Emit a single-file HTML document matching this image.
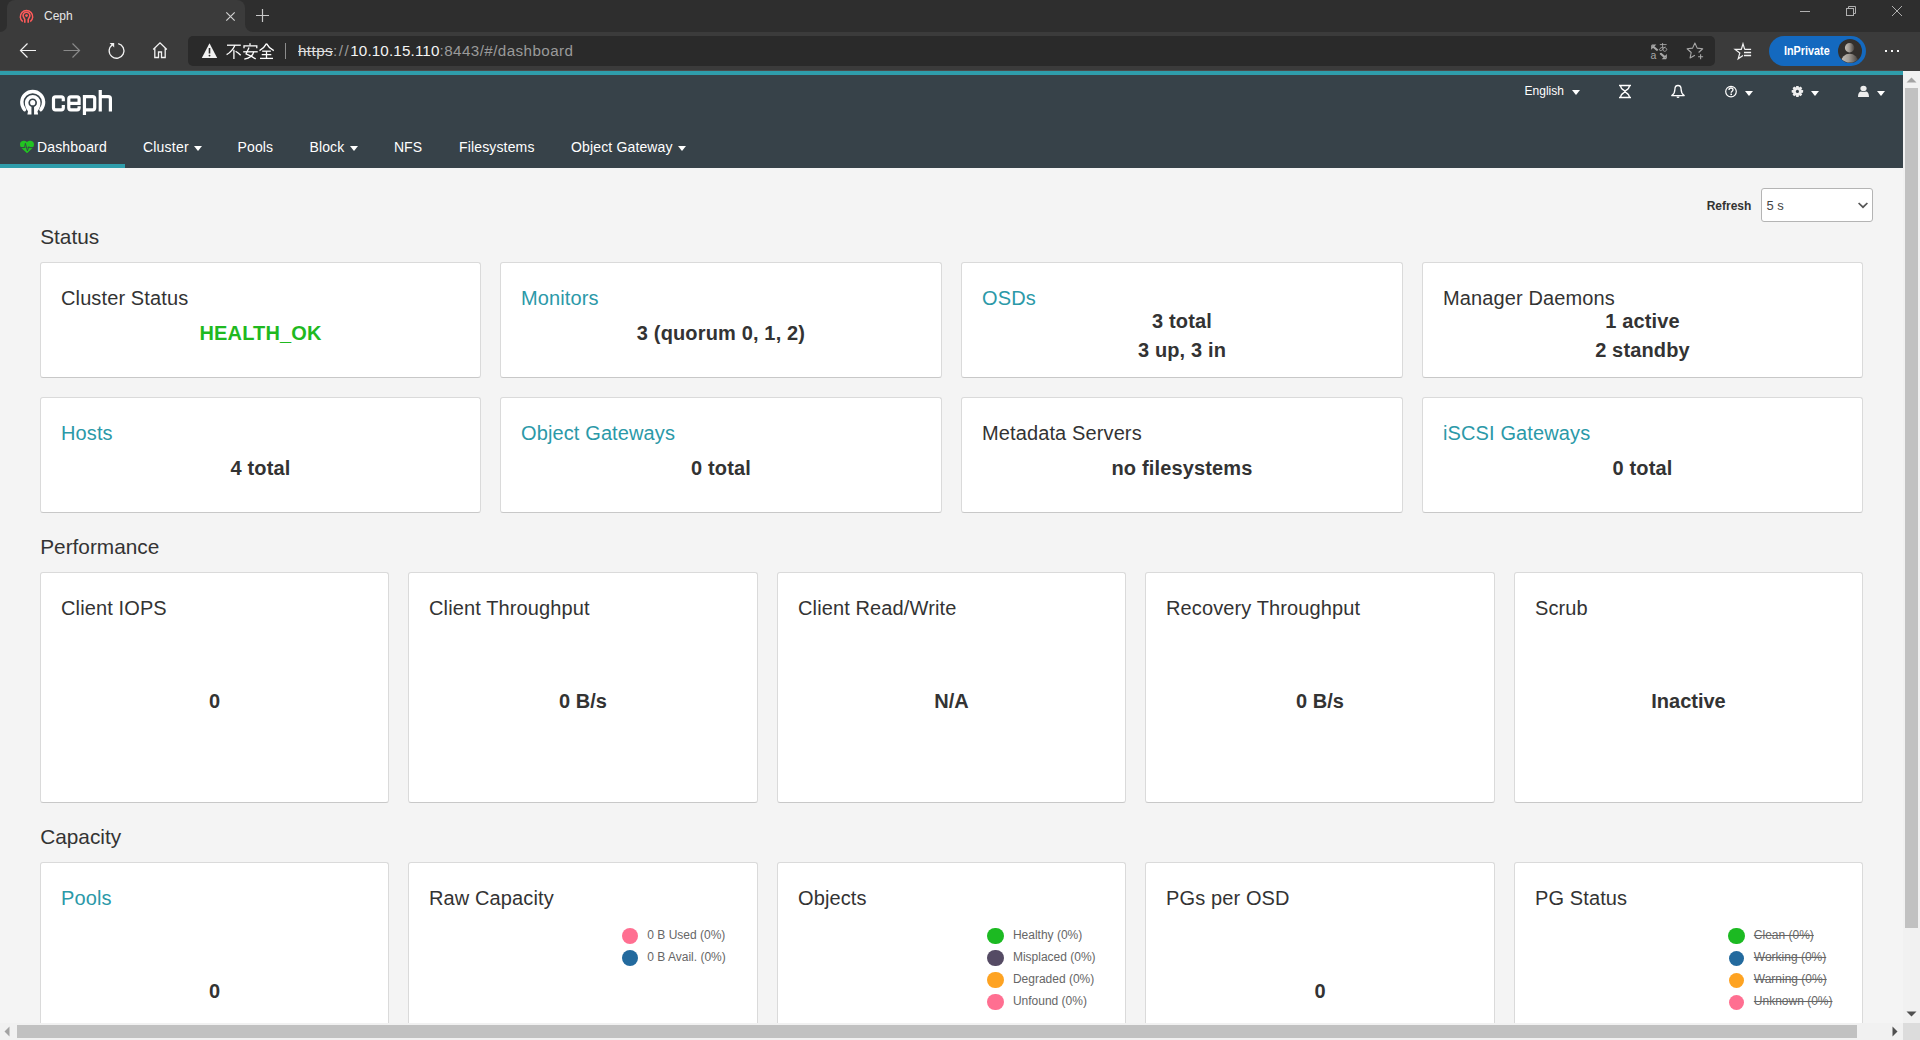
<!DOCTYPE html>
<html><head><meta charset="utf-8"><title>Ceph</title>
<style>
html,body{margin:0;padding:0;}
body{width:1920px;height:1040px;overflow:hidden;position:relative;background:#f4f4f4;font-family:"Liberation Sans",sans-serif;}
.t{position:absolute;white-space:nowrap;}
.card{position:absolute;background:#fff;border:1px solid #dadada;border-bottom-color:#c8c8c8;border-radius:3px;box-sizing:border-box;}
</style></head><body>

<div style="position:absolute;left:0px;top:0px;width:1920px;height:32px;background:#2e2e2e;"></div>
<div style="position:absolute;left:0px;top:31px;width:1920px;height:40px;background:#3b3b3b;"></div>
<div style="position:absolute;left:7px;top:0px;width:238px;height:41px;background:#3b3b3b;border-radius:8px 8px 0 0;"></div>
<div style="position:absolute;left:0px;top:23px;width:7px;height:9px;background:#3b3b3b;"></div>
<div style="position:absolute;left:0px;top:0px;width:7px;height:32px;background:#2e2e2e;border-radius:0 0 8px 0;"></div>
<div style="position:absolute;left:245px;top:23px;width:9px;height:9px;background:#3b3b3b;"></div>
<div style="position:absolute;left:245px;top:0px;width:1675px;height:32px;background:#2e2e2e;border-radius:0 0 0 8px;"></div>
<svg style="position:absolute;left:18.5px;top:8px;" width="15" height="15" viewBox="0 0 15 15"><g transform="translate(0.5,0.5)" fill="none" stroke="#ff5a5a"><path d="M3.2,13.1 A6.2,6.2 0 1 1 10.8,13.1" stroke-width="1.5"/><path d="M5.3,14.3 V11 C5.3,10.2 3.6,9 3.6,7.1 A3.4,3.4 0 0 1 10.4,7.1 C10.4,9 8.7,10.2 8.7,11 V14.3" stroke-width="1.6"/></g><circle cx="7.5" cy="7.6" r="1.35" fill="#ff5a5a"/></svg>
<div class="t" style="left:44px;top:10.14px;font-size:12px;line-height:12px;font-weight:400;color:#e6e6e6;">Ceph</div>
<svg style="position:absolute;left:225px;top:11px;" width="11" height="11" viewBox="0 0 11 11"><path d="M1.3,1.3 L9.7,9.7 M9.7,1.3 L1.3,9.7" stroke="#d0d0d0" stroke-width="1.2"/></svg>
<svg style="position:absolute;left:255px;top:8px;" width="15" height="15" viewBox="0 0 15 15"><path d="M7.5,1 V14 M1,7.5 H14" stroke="#c8c8c8" stroke-width="1.2"/></svg>
<svg style="position:absolute;left:1799px;top:5px;" width="12" height="12" viewBox="0 0 12 12"><path d="M1,6.5 H11" stroke="#b0b0b0" stroke-width="1"/></svg>
<svg style="position:absolute;left:1845px;top:5px;" width="12" height="12" viewBox="0 0 12 12"><rect x="1.5" y="3.5" width="7" height="7" fill="none" stroke="#b0b0b0"/><path d="M3.5,3.5 V1.5 H10.5 V8.5 H8.5" fill="none" stroke="#b0b0b0"/></svg>
<svg style="position:absolute;left:1891px;top:5px;" width="12" height="12" viewBox="0 0 12 12"><path d="M1,1 L11,11 M11,1 L1,11" stroke="#b0b0b0" stroke-width="1"/></svg>
<svg style="position:absolute;left:19px;top:42px;" width="18" height="17" viewBox="0 0 18 17"><path d="M1.5,8.5 H17 M8.5,1.5 L1.5,8.5 L8.5,15.5" fill="none" stroke="#f2f2f2" stroke-width="1.2"/></svg>
<svg style="position:absolute;left:63px;top:42px;" width="18" height="17" viewBox="0 0 18 17"><path d="M0.5,8.5 H16 M9.5,1.5 L16.5,8.5 L9.5,15.5" fill="none" stroke="#8a8a8a" stroke-width="1.2"/></svg>
<svg style="position:absolute;left:106px;top:42px;" width="20" height="18" viewBox="0 0 20 18"><path d="M12.2,1.6 A7.4,7.4 0 1 1 6.1,2.9" fill="none" stroke="#f2f2f2" stroke-width="1.3"/><path d="M3.6,1 H8.2 V5.6 Z" fill="#f2f2f2"/></svg>
<svg style="position:absolute;left:152px;top:41px;" width="16" height="18" viewBox="0 0 16 18"><path d="M1.2,8.5 L8,1.8 L14.8,8.5 M2.8,7 V16.5 H6.5 V11 H9.5 V16.5 H13.2 V7" fill="none" stroke="#f2f2f2" stroke-width="1.3"/></svg>
<div style="position:absolute;left:188px;top:36px;width:1527px;height:30px;background:#2a2a2a;border-radius:5px;"></div>
<svg style="position:absolute;left:201px;top:42px;" width="17" height="17" viewBox="0 0 17 17"><path d="M8.5,1.2 L16.2,16 H0.8 Z" fill="#f2f2f2"/><path d="M8.5,6 V11.5" stroke="#2a2a2a" stroke-width="1.6"/><circle cx="8.5" cy="13.6" r="0.95" fill="#2a2a2a"/></svg>
<svg style="position:absolute;left:226px;top:43px;" width="49" height="17" viewBox="0 0 49 17"><g fill="none" stroke="#ffffff" stroke-width="1.3" stroke-linecap="butt">
<!-- 不 -->
<path d="M1,2.2 H14.8"/>
<path d="M9,2.2 C7,6.5 4,9.8 0.6,11.6"/>
<path d="M7.9,6.8 V16"/>
<path d="M9.6,8.2 C11.5,9.3 13.2,10.7 14.7,12.2"/>
<!-- 安 -->
<g transform="translate(16.5,0)">
<path d="M7.5,0.3 V2.4"/>
<path d="M1.5,5.2 V2.8 H14.3 V5.2"/>
<path d="M6.5,4.4 C5.5,7 4.2,9.2 3.6,10.8 C7.5,12.4 10.8,14.2 13.2,16"/>
<path d="M0.7,8.8 H15.2"/>
<path d="M11.2,8.8 C10.5,12.4 7.5,15 1.8,16.1"/>
</g>
<!-- 全 -->
<g transform="translate(33,0)">
<path d="M7.5,0.6 C5.8,3.8 3.5,6 0.5,7.6"/>
<path d="M7.5,0.6 C9.2,3.8 11.5,6 14.8,7.6"/>
<path d="M3.2,8.2 H11.8"/>
<path d="M2.7,11.6 H12.3"/>
<path d="M7.5,8.2 V15.4"/>
<path d="M1,15.4 H14"/>
</g>
</g></svg>
<div style="position:absolute;left:285px;top:43px;width:1px;height:16px;background:#8c8c8c;"></div>
<div class="t" style="left:298px;top:42.2px;font-size:15.2px;line-height:17px;color:#9a9a9a;letter-spacing:0.42px;"><span style="color:#dedede;text-decoration:line-through;">https</span><span style="letter-spacing:1.5px;">://</span><span style="color:#f4f4f4;letter-spacing:0.15px;">10.10.15.110</span>:8443/#/dashboard</div>
<svg style="position:absolute;left:1650px;top:42px;" width="19" height="18" viewBox="0 0 19 18"><text x="0.6" y="16.6" font-family="Liberation Sans" font-size="10.5" fill="#a8a8a8">a</text><path d="M1.8,3.2 L4.8,3.2 L3.6,4.4 L8,8.2 M1.8,3.2 L1.8,6.2 L3,5 L7.2,8.6" fill="none" stroke="#a8a8a8" stroke-width="1.3"/><path d="M16.2,16.6 L13.2,16.6 L14.4,15.4 L10,11.6 M16.2,16.6 L16.2,13.6 L15,14.8 L10.8,11.2" fill="none" stroke="#a8a8a8" stroke-width="1.3"/><g fill="none" stroke="#a8a8a8" stroke-width="0.9"><path d="M9.8,2.6 H16.6 M12.6,1 C12.4,4 12.6,7 13.5,9.2"/><path d="M15.2,4.6 C13.5,6.8 11.5,9 10.2,8.6 C8.8,8.2 9.6,5.6 12.6,5.4 C15.8,5.2 17.6,6.8 16.4,8.4 C15.8,9.2 14.8,9.4 14.2,9.4"/></g></svg>
<svg style="position:absolute;left:1685px;top:41px;" width="20" height="20" viewBox="0 0 20 20"><path d="M13.61,11.51 L17.70,7.77 L12.19,7.14 L9.90,2.10 L7.61,7.14 L2.10,7.77 L6.19,11.51 L5.08,16.93 L9.90,14.20" fill="none" stroke="#a8a8a8" stroke-width="1.1" stroke-linejoin="round"/><path d="M15.6,13.2 V18.2 M13.1,15.7 H18.1" stroke="#a8a8a8" stroke-width="1.1"/></svg>
<svg style="position:absolute;left:1733px;top:42px;" width="20" height="19" viewBox="0 0 20 19"><path d="M11.7,7.4 L10,1.8 L8.3,7.4 H2.1 L6.8,11 L5.2,16.8 L10,13.5" fill="none" stroke="#f2f2f2" stroke-width="1.2" stroke-linejoin="miter"/><path d="M11.6,7.4 H18.1 M11,10.5 H18.1 M11,13.5 H18.1" stroke="#f2f2f2" stroke-width="1.3"/></svg>
<div style="position:absolute;left:1769px;top:36px;width:97px;height:30px;background:#1469bf;border-radius:15px;"></div>
<div class="t" style="left:1784.4px;top:44.62px;font-size:12.5px;line-height:12.5px;font-weight:700;color:#ffffff;transform:scaleX(0.865);transform-origin:0 0;">InPrivate</div>
<svg style="position:absolute;left:1838px;top:39px" width="24" height="24" viewBox="0 0 24 24"><defs><linearGradient id="av" x1="0" y1="0" x2="1" y2="0"><stop offset="0" stop-color="#c4beb6"/><stop offset="0.45" stop-color="#a29c95"/><stop offset="1" stop-color="#46423e"/></linearGradient><clipPath id="avc"><circle cx="12" cy="12" r="11.6"/></clipPath></defs><circle cx="12" cy="12" r="12" fill="#33302d"/><g clip-path="url(#avc)"><circle cx="11.6" cy="8.8" r="4.7" fill="url(#av)"/><ellipse cx="11.6" cy="23" rx="8.6" ry="8.2" fill="url(#av)"/></g></svg>
<div style="position:absolute;left:1885px;top:50px;width:2px;height:2px;background:#f6f6f6;"></div>
<div style="position:absolute;left:1891px;top:50px;width:2px;height:2px;background:#f6f6f6;"></div>
<div style="position:absolute;left:1897px;top:50px;width:2px;height:2px;background:#f6f6f6;"></div>
<div style="position:absolute;left:0px;top:70px;width:1903px;height:1px;background:#4c4a4b;"></div>
<div style="position:absolute;left:0px;top:71px;width:1903px;height:4px;background:#2f9dab;"></div>
<div style="position:absolute;left:0px;top:75px;width:1903px;height:93px;background:#374249;"></div>
<svg style="position:absolute;left:19px;top:89px;" width="27" height="27" viewBox="0 0 27 27"><g transform="translate(0.7,0.7)"><path d="M4.8,19.9 A10.9,10.9 0 1 1 21.2,19.9" fill="none" stroke="#ffffff" stroke-width="3.4" stroke-linecap="round"/><path d="M7.7,24.9 L8.3,21.5 C6.5,19.6 5.2,16.3 5.2,13 A7.8,7.8 0 1 1 20.8,13 C20.8,16.3 19.5,19.6 17.8,21.5 L18.4,24.9 Z" fill="#ffffff"/><circle cx="13" cy="13" r="4.3" fill="#374249"/><rect x="11.75" y="13" width="2.6" height="12.5" fill="#374249"/><circle cx="13" cy="13" r="2.6" fill="#ffffff"/></g></svg>
<svg style="position:absolute;left:50px;top:86px;" width="64" height="32" viewBox="0 0 64 32"><g fill="none" stroke="#ffffff" stroke-width="3.2" stroke-linejoin="miter">
<path d="M13.3,15.2 V12.85 A2,2 0 0 0 11.3,10.85 H5.5 A2,2 0 0 0 3.5,12.85 V21.85 A2,2 0 0 0 5.5,23.85 H11.3 A2,2 0 0 0 13.3,21.85 V19"/>
<path d="M18.8,17.35 H29.1 V12.85 A2,2 0 0 0 27.1,10.85 H20.8 A2,2 0 0 0 18.8,12.85 V21.85 A2,2 0 0 0 20.8,23.85 H27.1 A2,2 0 0 0 29.1,21.85 V20.3"/>
<path d="M34.45,8.9 V28.9 M34.45,10.6 H42.7 A2,2 0 0 1 44.7,12.6 V21.85 A2,2 0 0 1 42.7,23.85 H34.45"/>
<path d="M50.25,4 V25.5 M50.25,10.7 H58.4 A2,2 0 0 1 60.4,12.7 V25.5"/>
</g></svg>
<svg style="position:absolute;left:19px;top:140px;" width="16" height="14" viewBox="0 0 16 14"><path d="M8,2.1 C9,1 10.3,0.6 11.8,0.7 C14,0.9 15,2.4 15,4.4 C15,5.6 14.6,6.5 14,7.4 H2 C1.4,6.5 1,5.6 1,4.4 C1,2.4 2,0.9 4.2,0.7 C5.7,0.6 7,1 8,2.1 Z" fill="#22c322"/><path d="M2.2,7.8 H13.8 L8,13.3 Z" fill="#22c322"/><path d="M0,7.6 H5.6 L6.4,3.4 L8.4,10.8 L9.9,6.6 L10.6,7.6 H16" fill="none" stroke="#374249" stroke-width="0.95"/></svg>
<div class="t" style="left:37px;top:140.15px;font-size:14px;line-height:14px;font-weight:400;color:#ffffff;letter-spacing:0.15px;">Dashboard</div>
<div class="t" style="left:143px;top:140.15px;font-size:14px;line-height:14px;font-weight:400;color:#ffffff;letter-spacing:0.2px;">Cluster</div>
<svg style="position:absolute;left:194px;top:146px;" width="8" height="5" viewBox="0 0 8 5"><path d="M0,0 H8 L4.0,5 Z" fill="#fff"/></svg>
<div class="t" style="left:237.5px;top:140.15px;font-size:14px;line-height:14px;font-weight:400;color:#ffffff;letter-spacing:0.15px;">Pools</div>
<div class="t" style="left:309.5px;top:140.15px;font-size:14px;line-height:14px;font-weight:400;color:#ffffff;letter-spacing:0.1px;">Block</div>
<svg style="position:absolute;left:350px;top:146px;" width="8" height="5" viewBox="0 0 8 5"><path d="M0,0 H8 L4.0,5 Z" fill="#fff"/></svg>
<div class="t" style="left:394px;top:140.15px;font-size:14px;line-height:14px;font-weight:400;color:#ffffff;">NFS</div>
<div class="t" style="left:459px;top:140.15px;font-size:14px;line-height:14px;font-weight:400;color:#ffffff;letter-spacing:0.15px;">Filesystems</div>
<div class="t" style="left:571px;top:140.15px;font-size:14px;line-height:14px;font-weight:400;color:#ffffff;letter-spacing:0.15px;">Object Gateway</div>
<svg style="position:absolute;left:678px;top:146px;" width="8" height="5" viewBox="0 0 8 5"><path d="M0,0 H8 L4.0,5 Z" fill="#fff"/></svg>
<div style="position:absolute;left:0px;top:164px;width:125px;height:4px;background:#2f9dab;"></div>
<div class="t" style="left:1524.6px;top:84.64px;font-size:12px;line-height:12px;font-weight:400;color:#ffffff;">English</div>
<svg style="position:absolute;left:1572px;top:90px;" width="8" height="5" viewBox="0 0 8 5"><path d="M0,0 H8 L4.0,5 Z" fill="#fff"/></svg>
<svg style="position:absolute;left:1618px;top:84px;" width="14" height="15" viewBox="0 0 14 15"><path d="M1,1.5 H13 M1,13.5 H13" stroke="#fff" stroke-width="1.6"/><path d="M2.6,1.5 C2.6,6 7,6 7,7.5 C7,9 2.6,9 2.6,13.5 M11.4,1.5 C11.4,6 7,6 7,7.5 C7,9 11.4,9 11.4,13.5" fill="none" stroke="#fff" stroke-width="1.3"/></svg>
<svg style="position:absolute;left:1670px;top:84px;" width="16" height="15" viewBox="0 0 16 15"><path d="M8,1.5 C6.3,1.5 4.9,2.8 4.9,5.2 C4.9,8 4.3,9.8 1.8,11.6 H14.2 C11.7,9.8 11.1,8 11.1,5.2 C11.1,2.8 9.7,1.5 8,1.5 Z" fill="none" stroke="#fff" stroke-width="1.3" stroke-linejoin="round"/><path d="M6.5,12.5 A1.5,1.5 0 0 0 9.5,12.5 Z" fill="#fff"/></svg>
<svg style="position:absolute;left:1724px;top:85px;" width="14" height="13" viewBox="0 0 14 13"><circle cx="7" cy="6.6" r="5.3" fill="none" stroke="#fff" stroke-width="1.2"/><path d="M5,5 C5,3.6 5.9,3 7,3 C8.2,3 9,3.7 9,4.8 C9,6.2 7.2,6.3 7.2,7.8" fill="none" stroke="#fff" stroke-width="1.3"/><rect x="6.4" y="8.6" width="1.6" height="1.5" fill="#fff"/></svg>
<svg style="position:absolute;left:1745px;top:91px;" width="8" height="5" viewBox="0 0 8 5"><path d="M0,0 H8 L4.0,5 Z" fill="#fff"/></svg>
<svg style="position:absolute;left:1791px;top:86px;" width="13" height="11" viewBox="0 0 13 11"><g transform="translate(6.4,5.4)"><rect x="-1.3" y="-5.7" width="2.6" height="2.4" rx="0.4" transform="rotate(0)" fill="#eeeeee"/><rect x="-1.3" y="-5.7" width="2.6" height="2.4" rx="0.4" transform="rotate(45)" fill="#eeeeee"/><rect x="-1.3" y="-5.7" width="2.6" height="2.4" rx="0.4" transform="rotate(90)" fill="#eeeeee"/><rect x="-1.3" y="-5.7" width="2.6" height="2.4" rx="0.4" transform="rotate(135)" fill="#eeeeee"/><rect x="-1.3" y="-5.7" width="2.6" height="2.4" rx="0.4" transform="rotate(180)" fill="#eeeeee"/><rect x="-1.3" y="-5.7" width="2.6" height="2.4" rx="0.4" transform="rotate(225)" fill="#eeeeee"/><rect x="-1.3" y="-5.7" width="2.6" height="2.4" rx="0.4" transform="rotate(270)" fill="#eeeeee"/><rect x="-1.3" y="-5.7" width="2.6" height="2.4" rx="0.4" transform="rotate(315)" fill="#eeeeee"/><circle r="4.5" fill="#eeeeee"/><circle r="1.55" fill="#374249"/></g></svg>
<svg style="position:absolute;left:1811px;top:91px;" width="8" height="5" viewBox="0 0 8 5"><path d="M0,0 H8 L4.0,5 Z" fill="#fff"/></svg>
<svg style="position:absolute;left:1857px;top:85px;" width="13" height="13" viewBox="0 0 13 13"><ellipse cx="6.5" cy="3.5" rx="3.1" ry="2.75" fill="#eeeeee"/><path d="M1,12 C1,8.6 2.3,6.6 3.8,6.5 C5,7.1 8,7.1 9.2,6.5 C10.7,6.6 12,8.6 12,12 Z" fill="#eeeeee"/></svg>
<svg style="position:absolute;left:1877px;top:91px;" width="8" height="5" viewBox="0 0 8 5"><path d="M0,0 H8 L4.0,5 Z" fill="#fff"/></svg>
<div style="position:absolute;left:0px;top:168px;width:1903px;height:855px;background:#f4f4f4;"></div>
<div class="t" style="left:1706.7px;top:200.04px;font-size:12px;line-height:12px;font-weight:700;color:#333333;">Refresh</div>
<div style="position:absolute;left:1761px;top:188px;width:112px;height:34px;background:#fff;border:1px solid #b4b4b4;border-radius:3px;box-sizing:border-box;"></div>
<div class="t" style="left:1766.5px;top:198.99px;font-size:13px;line-height:13px;font-weight:400;color:#444444;">5 s</div>
<svg style="position:absolute;left:1857px;top:201px;" width="12" height="8" viewBox="0 0 12 8"><path d="M1.6,2 L6,6.2 L10.4,2" fill="none" stroke="#555" stroke-width="1.7"/></svg>
<div class="t" style="left:40.2px;top:226.59px;font-size:20.8px;line-height:20.8px;font-weight:400;color:#333333;">Status</div>
<div class="card" style="left:40.00px;top:262px;width:441.00px;height:116px;"></div>
<div class="t" style="left:61px;top:288.07px;font-size:20px;line-height:20px;font-weight:400;color:#333333;letter-spacing:0.12px;">Cluster Status</div>
<div class="t" style="left:-139.50px;width:800px;text-align:center;top:323.07px;font-size:20px;line-height:20px;font-weight:700;color:#1fb91f;letter-spacing:0.15px;">HEALTH_OK</div>
<div class="card" style="left:500.00px;top:262px;width:442.00px;height:116px;"></div>
<div class="t" style="left:521px;top:288.07px;font-size:20px;line-height:20px;font-weight:400;color:#2b99a8;letter-spacing:0.12px;">Monitors</div>
<div class="t" style="left:321.00px;width:800px;text-align:center;top:323.07px;font-size:20px;line-height:20px;font-weight:700;color:#333333;letter-spacing:0.15px;">3 (quorum 0, 1, 2)</div>
<div class="card" style="left:961.00px;top:262px;width:442.00px;height:116px;"></div>
<div class="t" style="left:982px;top:288.07px;font-size:20px;line-height:20px;font-weight:400;color:#2b99a8;letter-spacing:0.12px;">OSDs</div>
<div class="t" style="left:782.00px;width:800px;text-align:center;top:310.57px;font-size:20px;line-height:20px;font-weight:700;color:#333333;letter-spacing:0.15px;">3 total</div>
<div class="t" style="left:782.00px;width:800px;text-align:center;top:340.07px;font-size:20px;line-height:20px;font-weight:700;color:#333333;letter-spacing:0.15px;">3 up, 3 in</div>
<div class="card" style="left:1422.00px;top:262px;width:441.00px;height:116px;"></div>
<div class="t" style="left:1443px;top:288.07px;font-size:20px;line-height:20px;font-weight:400;color:#333333;letter-spacing:0.12px;">Manager Daemons</div>
<div class="t" style="left:1242.50px;width:800px;text-align:center;top:310.57px;font-size:20px;line-height:20px;font-weight:700;color:#333333;letter-spacing:0.15px;">1 active</div>
<div class="t" style="left:1242.50px;width:800px;text-align:center;top:340.07px;font-size:20px;line-height:20px;font-weight:700;color:#333333;letter-spacing:0.15px;">2 standby</div>
<div class="card" style="left:40.00px;top:397px;width:441.00px;height:116px;"></div>
<div class="t" style="left:61px;top:423.07px;font-size:20px;line-height:20px;font-weight:400;color:#2b99a8;letter-spacing:0.12px;">Hosts</div>
<div class="t" style="left:-139.50px;width:800px;text-align:center;top:458.07px;font-size:20px;line-height:20px;font-weight:700;color:#333333;letter-spacing:0.15px;">4 total</div>
<div class="card" style="left:500.00px;top:397px;width:442.00px;height:116px;"></div>
<div class="t" style="left:521px;top:423.07px;font-size:20px;line-height:20px;font-weight:400;color:#2b99a8;letter-spacing:0.12px;">Object Gateways</div>
<div class="t" style="left:321.00px;width:800px;text-align:center;top:458.07px;font-size:20px;line-height:20px;font-weight:700;color:#333333;letter-spacing:0.15px;">0 total</div>
<div class="card" style="left:961.00px;top:397px;width:442.00px;height:116px;"></div>
<div class="t" style="left:982px;top:423.07px;font-size:20px;line-height:20px;font-weight:400;color:#333333;letter-spacing:0.12px;">Metadata Servers</div>
<div class="t" style="left:782.00px;width:800px;text-align:center;top:458.07px;font-size:20px;line-height:20px;font-weight:700;color:#333333;letter-spacing:0.15px;">no filesystems</div>
<div class="card" style="left:1422.00px;top:397px;width:441.00px;height:116px;"></div>
<div class="t" style="left:1443px;top:423.07px;font-size:20px;line-height:20px;font-weight:400;color:#2b99a8;letter-spacing:0.12px;">iSCSI Gateways</div>
<div class="t" style="left:1242.50px;width:800px;text-align:center;top:458.07px;font-size:20px;line-height:20px;font-weight:700;color:#333333;letter-spacing:0.15px;">0 total</div>
<div class="t" style="left:40.2px;top:536.59px;font-size:20.8px;line-height:20.8px;font-weight:400;color:#333333;">Performance</div>
<div class="card" style="left:40.00px;top:572px;width:349.00px;height:231px;"></div>
<div class="t" style="left:61px;top:597.87px;font-size:20px;line-height:20px;font-weight:400;color:#333333;letter-spacing:0.12px;">Client IOPS</div>
<div class="t" style="left:-185.50px;width:800px;text-align:center;top:690.67px;font-size:20px;line-height:20px;font-weight:700;color:#333333;">0</div>
<div class="card" style="left:408.00px;top:572px;width:350.00px;height:231px;"></div>
<div class="t" style="left:429px;top:597.87px;font-size:20px;line-height:20px;font-weight:400;color:#333333;letter-spacing:0.12px;">Client Throughput</div>
<div class="t" style="left:183.00px;width:800px;text-align:center;top:690.67px;font-size:20px;line-height:20px;font-weight:700;color:#333333;">0 B/s</div>
<div class="card" style="left:777.00px;top:572px;width:349.00px;height:231px;"></div>
<div class="t" style="left:798px;top:597.87px;font-size:20px;line-height:20px;font-weight:400;color:#333333;letter-spacing:0.12px;">Client Read/Write</div>
<div class="t" style="left:551.50px;width:800px;text-align:center;top:690.67px;font-size:20px;line-height:20px;font-weight:700;color:#333333;">N/A</div>
<div class="card" style="left:1145.00px;top:572px;width:350.00px;height:231px;"></div>
<div class="t" style="left:1166px;top:597.87px;font-size:20px;line-height:20px;font-weight:400;color:#333333;letter-spacing:0.12px;">Recovery Throughput</div>
<div class="t" style="left:920.00px;width:800px;text-align:center;top:690.67px;font-size:20px;line-height:20px;font-weight:700;color:#333333;">0 B/s</div>
<div class="card" style="left:1514.00px;top:572px;width:349.00px;height:231px;"></div>
<div class="t" style="left:1535px;top:597.87px;font-size:20px;line-height:20px;font-weight:400;color:#333333;letter-spacing:0.12px;">Scrub</div>
<div class="t" style="left:1288.50px;width:800px;text-align:center;top:690.67px;font-size:20px;line-height:20px;font-weight:700;color:#333333;">Inactive</div>
<div class="t" style="left:40.2px;top:826.59px;font-size:20.8px;line-height:20.8px;font-weight:400;color:#333333;">Capacity</div>
<div class="card" style="left:40.00px;top:862px;width:349.00px;height:231px;"></div>
<div class="t" style="left:61px;top:888.07px;font-size:20px;line-height:20px;font-weight:400;color:#2b99a8;letter-spacing:0.12px;">Pools</div>
<div class="t" style="left:-185.50px;width:800px;text-align:center;top:981.07px;font-size:20px;line-height:20px;font-weight:700;color:#333333;">0</div>
<div class="card" style="left:408.00px;top:862px;width:350.00px;height:231px;"></div>
<div class="t" style="left:429px;top:888.07px;font-size:20px;line-height:20px;font-weight:400;color:#333333;letter-spacing:0.12px;">Raw Capacity</div>
<div class="card" style="left:777.00px;top:862px;width:349.00px;height:231px;"></div>
<div class="t" style="left:798px;top:888.07px;font-size:20px;line-height:20px;font-weight:400;color:#333333;letter-spacing:0.12px;">Objects</div>
<div class="card" style="left:1145.00px;top:862px;width:350.00px;height:231px;"></div>
<div class="t" style="left:1166px;top:888.07px;font-size:20px;line-height:20px;font-weight:400;color:#333333;letter-spacing:0.12px;">PGs per OSD</div>
<div class="t" style="left:920.00px;width:800px;text-align:center;top:981.07px;font-size:20px;line-height:20px;font-weight:700;color:#333333;">0</div>
<div class="card" style="left:1514.00px;top:862px;width:349.00px;height:231px;"></div>
<div class="t" style="left:1535px;top:888.07px;font-size:20px;line-height:20px;font-weight:400;color:#333333;letter-spacing:0.12px;">PG Status</div>
<div style="position:absolute;left:621.70px;top:927.70px;width:16.6px;height:16.6px;border-radius:50%;background:#ff6f91;"></div>
<div class="t" style="left:647.3px;top:928.64px;font-size:12px;line-height:12px;font-weight:400;color:#666666;">0 B Used (0%)</div>
<div style="position:absolute;left:621.70px;top:949.70px;width:16.6px;height:16.6px;border-radius:50%;background:#236a9e;"></div>
<div class="t" style="left:647.3px;top:950.64px;font-size:12px;line-height:12px;font-weight:400;color:#666666;">0 B Avail. (0%)</div>
<div style="position:absolute;left:987.10px;top:927.70px;width:16.6px;height:16.6px;border-radius:50%;background:#1cba22;"></div>
<div class="t" style="left:1012.9000000000001px;top:928.64px;font-size:12px;line-height:12px;font-weight:400;color:#666666;">Healthy (0%)</div>
<div style="position:absolute;left:987.10px;top:949.70px;width:16.6px;height:16.6px;border-radius:50%;background:#554b64;"></div>
<div class="t" style="left:1012.9000000000001px;top:950.64px;font-size:12px;line-height:12px;font-weight:400;color:#666666;">Misplaced (0%)</div>
<div style="position:absolute;left:987.10px;top:971.70px;width:16.6px;height:16.6px;border-radius:50%;background:#fea322;"></div>
<div class="t" style="left:1012.9000000000001px;top:972.64px;font-size:12px;line-height:12px;font-weight:400;color:#666666;">Degraded (0%)</div>
<div style="position:absolute;left:987.10px;top:993.70px;width:16.6px;height:16.6px;border-radius:50%;background:#ff6f91;"></div>
<div class="t" style="left:1012.9000000000001px;top:994.64px;font-size:12px;line-height:12px;font-weight:400;color:#666666;">Unfound (0%)</div>
<div style="position:absolute;left:1728.00px;top:927.70px;width:16.6px;height:16.6px;border-radius:50%;background:#1cba22;"></div>
<div class="t" style="left:1753.8000000000002px;top:928.64px;font-size:12px;line-height:12px;font-weight:400;color:#666666;text-decoration:line-through;">Clean (0%)</div>
<div style="position:absolute;left:1728.80px;top:950.50px;width:15px;height:15px;border-radius:50%;background:#236a9e;"></div>
<div class="t" style="left:1753.8000000000002px;top:950.64px;font-size:12px;line-height:12px;font-weight:400;color:#666666;text-decoration:line-through;">Working (0%)</div>
<div style="position:absolute;left:1728.80px;top:972.50px;width:15px;height:15px;border-radius:50%;background:#fea322;"></div>
<div class="t" style="left:1753.8000000000002px;top:972.64px;font-size:12px;line-height:12px;font-weight:400;color:#666666;text-decoration:line-through;">Warning (0%)</div>
<div style="position:absolute;left:1728.80px;top:994.50px;width:15px;height:15px;border-radius:50%;background:#ff6f91;"></div>
<div class="t" style="left:1753.8000000000002px;top:994.64px;font-size:12px;line-height:12px;font-weight:400;color:#666666;text-decoration:line-through;">Unknown (0%)</div>
<div style="position:absolute;left:1903px;top:71px;width:17px;height:952px;background:#f1f1f1;"></div>
<svg style="position:absolute;left:1906px;top:77px;" width="11" height="6" viewBox="0 0 11 6"><path d="M0.5,5.5 L5.5,0.5 L10.5,5.5 Z" fill="#a3a3a3"/></svg>
<div style="position:absolute;left:1905px;top:88px;width:13px;height:840px;background:#c1c1c1;"></div>
<svg style="position:absolute;left:1906px;top:1011px;" width="11" height="6" viewBox="0 0 11 6"><path d="M0.5,0.5 L5.5,5.5 L10.5,0.5 Z" fill="#505050"/></svg>
<div style="position:absolute;left:0px;top:1023px;width:1903px;height:17px;background:#f1f1f1;"></div>
<svg style="position:absolute;left:4px;top:1026px;" width="6" height="11" viewBox="0 0 6 11"><path d="M5.5,0.5 L0.5,5.5 L5.5,10.5 Z" fill="#a3a3a3"/></svg>
<div style="position:absolute;left:17px;top:1025px;width:1840px;height:13px;background:#c1c1c1;"></div>
<svg style="position:absolute;left:1892px;top:1026px;" width="6" height="11" viewBox="0 0 6 11"><path d="M0.5,0.5 L5.5,5.5 L0.5,10.5 Z" fill="#505050"/></svg>
<div style="position:absolute;left:1903px;top:1023px;width:17px;height:17px;background:#dcdcdc;"></div>
</body></html>
